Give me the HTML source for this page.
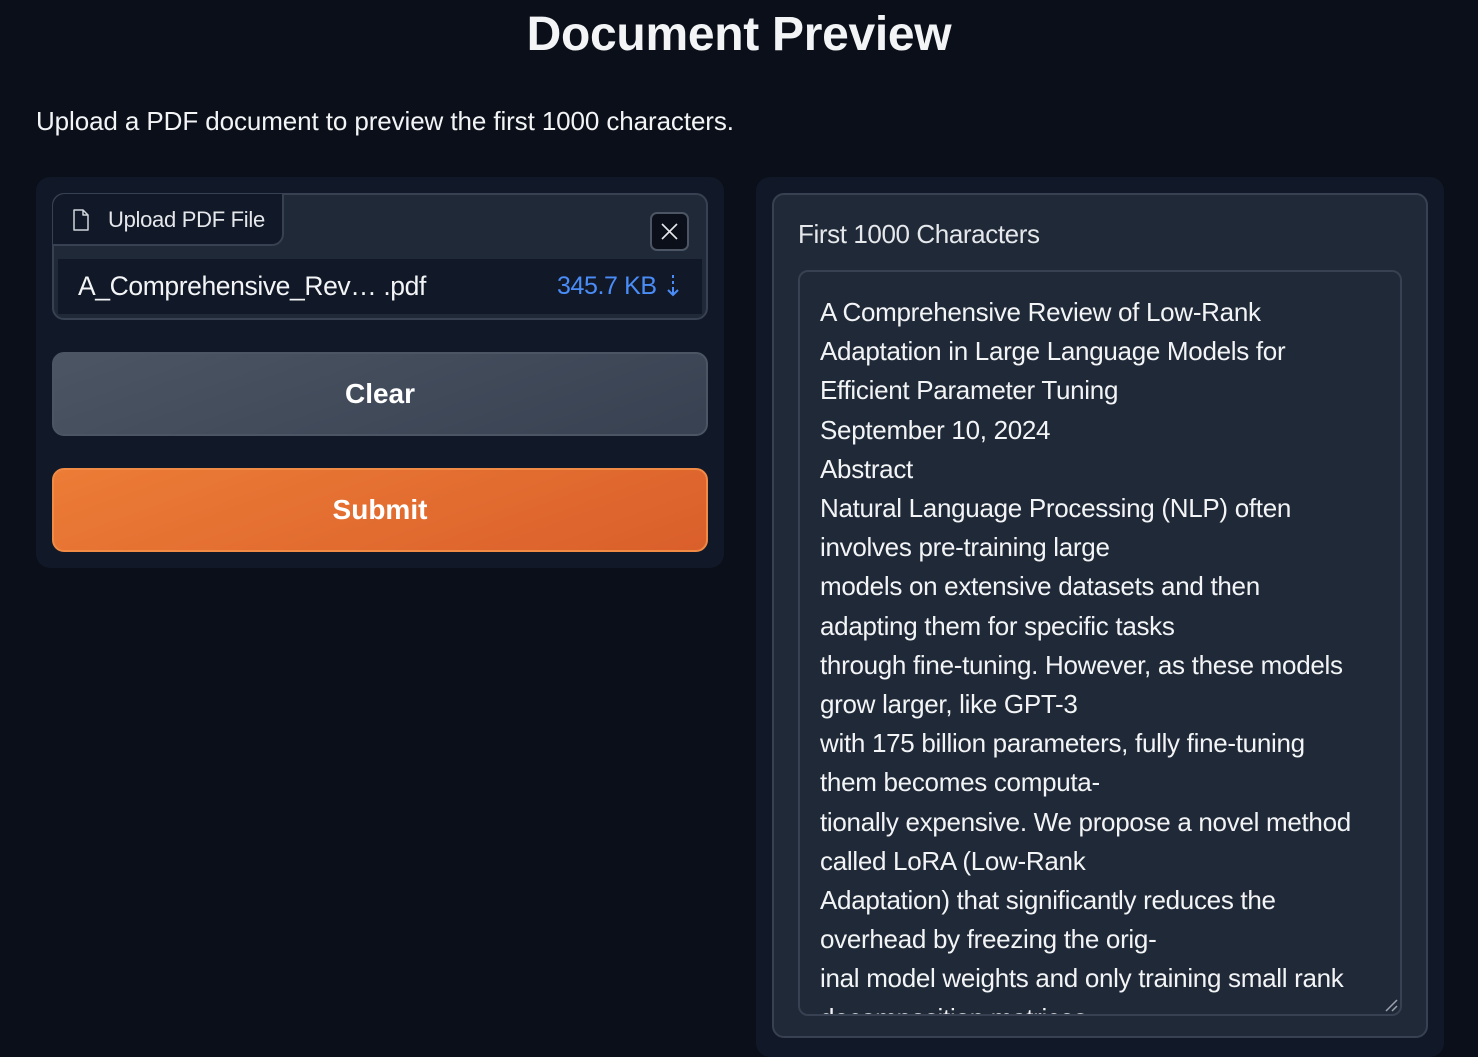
<!DOCTYPE html>
<html><head><style>
*{box-sizing:border-box;margin:0;padding:0}
body{width:1478px;height:1044px;overflow:hidden;background:#0b0f19;color:#f3f4f6;font-family:"Liberation Sans",sans-serif;position:relative}
.abs{position:absolute}
h1{position:absolute;left:0;width:1478px;top:7px;text-align:center;font-size:48px;font-weight:bold;letter-spacing:-0.3px}
.sub{left:36px;top:106px;font-size:26px;letter-spacing:-0.1px}
.panel{background:#111827;border-radius:14px}
.blk{background:#1f2937;border:2px solid #374151;border-radius:12px}
.btn{border-radius:12px;display:flex;align-items:center;justify-content:center;font-size:28px;font-weight:bold;color:#fff}
.ta{left:798px;top:270px;width:604px;height:746px;border:2px solid #374151;border-radius:10px;overflow:hidden;padding:21px 20px;font-size:26px;line-height:39.2px;letter-spacing:-0.3px;white-space:pre;background:#1f2937}
</style></head><body>
<h1>Document Preview</h1>
<div class="abs sub">Upload a PDF document to preview the first 1000 characters.</div>

<div class="abs panel" style="left:36px;top:177px;width:688px;height:391px"></div>
<div class="abs blk" style="left:52px;top:193px;width:656px;height:127px"></div>
<div class="abs" style="left:53px;top:194px;width:231px;height:52px;background:#111827;border-right:2px solid #374151;border-bottom:2px solid #374151;border-radius:12px 0 12px 0"></div>
<svg class="abs" style="left:72px;top:209px" width="18" height="22" viewBox="0 0 18 22"><path d="M2 1h9l5 5v15H2z M11 1v5h5" fill="none" stroke="#d1d5db" stroke-width="1.5" stroke-linejoin="round"/></svg>
<div class="abs" style="left:108px;top:207px;font-size:22px;color:#e5e7eb;letter-spacing:-0.3px">Upload PDF File</div>
<div class="abs" style="left:650px;top:212px;width:39px;height:39px;background:#0b0f19;border:2px solid #4b5563;border-radius:7px"></div>
<svg class="abs" style="left:660px;top:222px" width="19" height="19"><path d="M2 2L17 17M17 2L2 17" stroke="#e5e7eb" stroke-width="1.6"/></svg>
<div class="abs" style="left:58px;top:259px;width:644px;height:55px;background:#111827"></div>
<div class="abs" style="left:78px;top:271px;font-size:26.5px;letter-spacing:-0.4px">A_Comprehensive_Rev… .pdf</div>
<div class="abs" style="left:557px;top:272px;font-size:25px;color:#4b8df8;letter-spacing:-0.4px">345.7 KB</div>
<svg class="abs" style="left:666px;top:274px" width="14" height="24"><path d="M7 1v3M7 7v3M7 13v8M2 16l5 5 5-5" fill="none" stroke="#4b8df8" stroke-width="2"/></svg>
<div class="abs btn" style="left:52px;top:352px;width:656px;height:84px;background:linear-gradient(160deg,#4b5563,#374151);border:2px solid #4b5563">Clear</div>
<div class="abs btn" style="left:52px;top:468px;width:656px;height:84px;background:linear-gradient(160deg,#ec7c36,#da5f2b);border:2px solid #f08a45">Submit</div>

<div class="abs panel" style="left:756px;top:177px;width:688px;height:880px"></div>
<div class="abs blk" style="left:772px;top:193px;width:656px;height:845px"></div>
<div class="abs" style="left:798px;top:219px;font-size:26px;color:#e5e7eb;letter-spacing:-0.4px">First 1000 Characters</div>
<div class="abs ta">A Comprehensive Review of Low-Rank
Adaptation in Large Language Models for
Efficient Parameter Tuning
September 10, 2024
Abstract
Natural Language Processing (NLP) often
involves pre-training large
models on extensive datasets and then
adapting them for specific tasks
through fine-tuning. However, as these models
grow larger, like GPT-3
with 175 billion parameters, fully fine-tuning
them becomes computa-
tionally expensive. We propose a novel method
called LoRA (Low-Rank
Adaptation) that significantly reduces the
overhead by freezing the orig-
inal model weights and only training small rank
decomposition matrices</div>
<svg class="abs" style="left:1384px;top:998px" width="14" height="14"><path d="M2 13L13 2M8 13L13 8" stroke="#9ca3af" stroke-width="1.5"/></svg>
</body></html>
